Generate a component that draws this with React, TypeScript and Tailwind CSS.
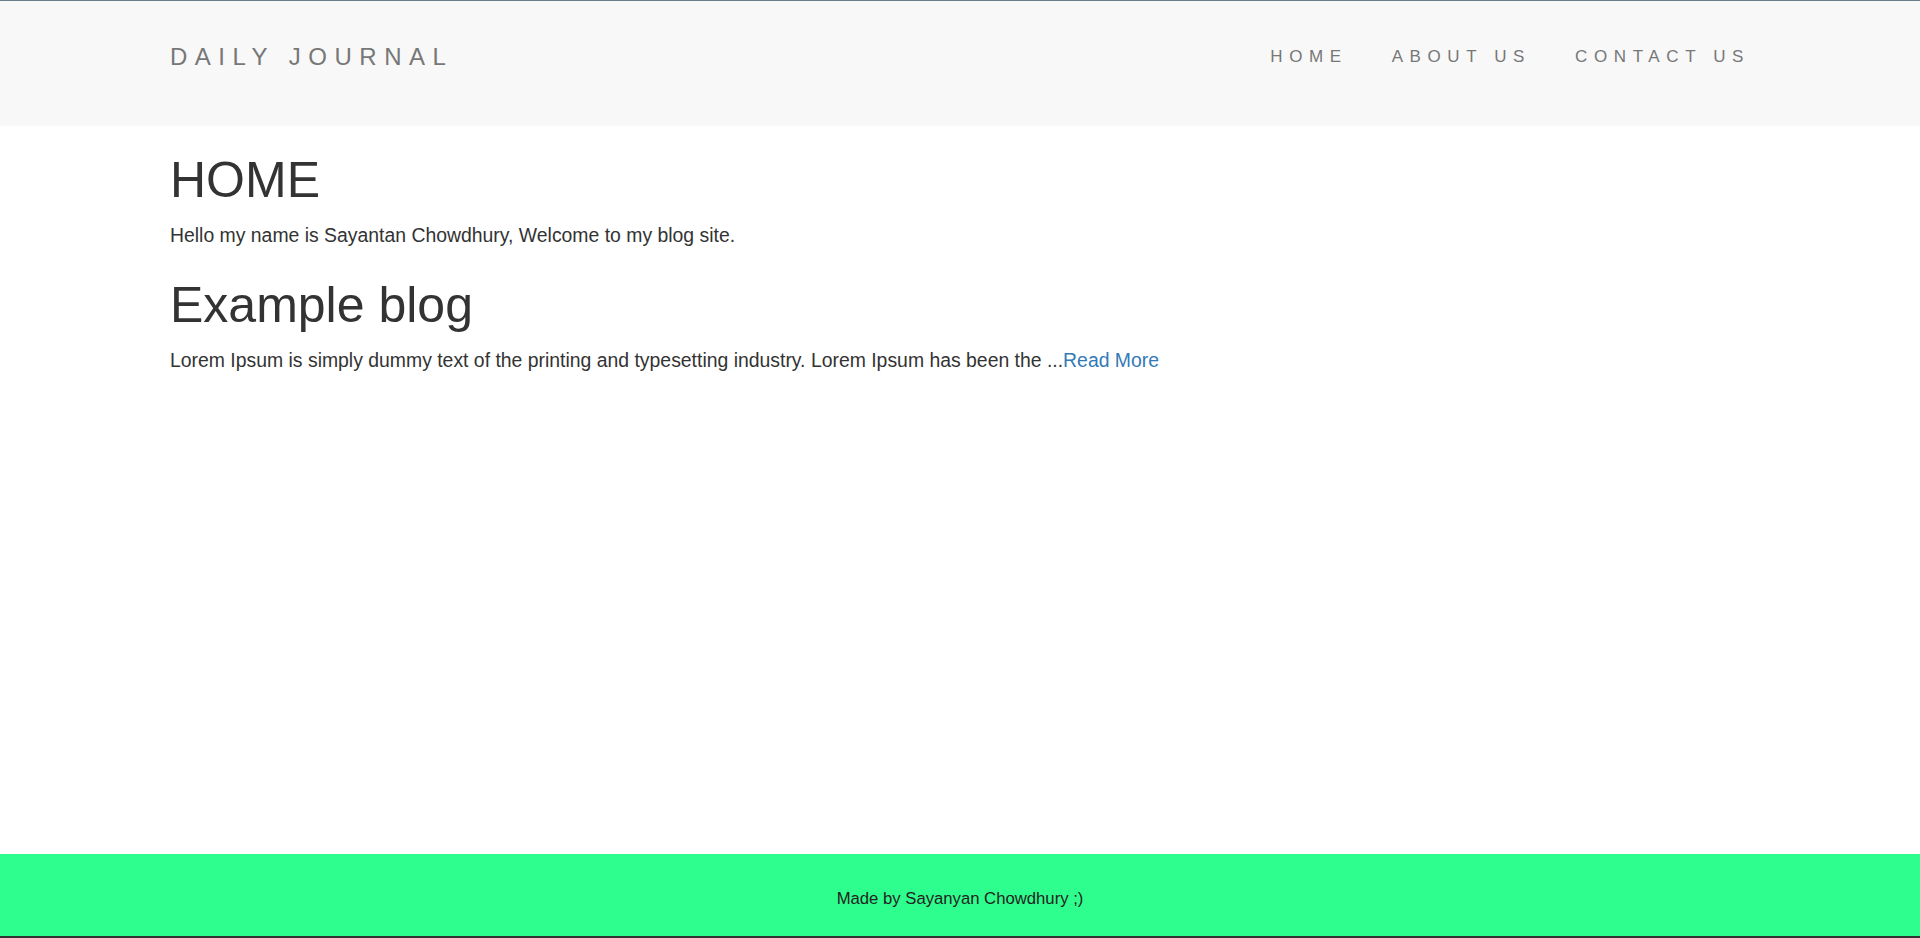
import React from "react";

export default function App() {
  return (
    <div
      className="min-h-[938px] flex flex-col bg-white text-[#333]"
      style={{ fontFamily: '"Liberation Sans", Arial, sans-serif' }}
    >
      <header className="h-[126px] bg-[#f8f8f8] border-t border-[#6a7d8a] flex items-center justify-between px-[170px] pb-[14px]">
        <div className="text-[24px] tracking-[7.5px] text-[#777] leading-none">DAILY JOURNAL</div>
        <nav className="flex items-center gap-[44px] text-[17px] tracking-[6.6px] text-[#777] leading-none">
          <span>HOME</span>
          <span>ABOUT US</span>
          <span>CONTACT US</span>
        </nav>
      </header>
      <main className="flex-1 px-[170px]">
        <h1 className="mt-[27px] text-[50px] leading-[1.1]">HOME</h1>
        <p className="mt-[14px] text-[19.4px] leading-[1.43]">Hello my name is Sayantan Chowdhury, Welcome to my blog site.</p>
        <h1 className="mt-[28px] text-[50px] leading-[1.1]">Example blog</h1>
        <p className="mt-[14px] text-[19.4px] leading-[1.43]">
          Lorem Ipsum is simply dummy text of the printing and typesetting industry. Lorem Ipsum has been the ...
          <a className="text-[#337ab7]">Read More</a>
        </p>
      </main>
      <footer className="h-[84px] bg-[#2efe8d] border-b-2 border-[#333] flex items-center justify-center pt-[8px] text-[16.7px] text-[#222]">
        Made by Sayanyan Chowdhury ;)
      </footer>
    </div>
  );
}
